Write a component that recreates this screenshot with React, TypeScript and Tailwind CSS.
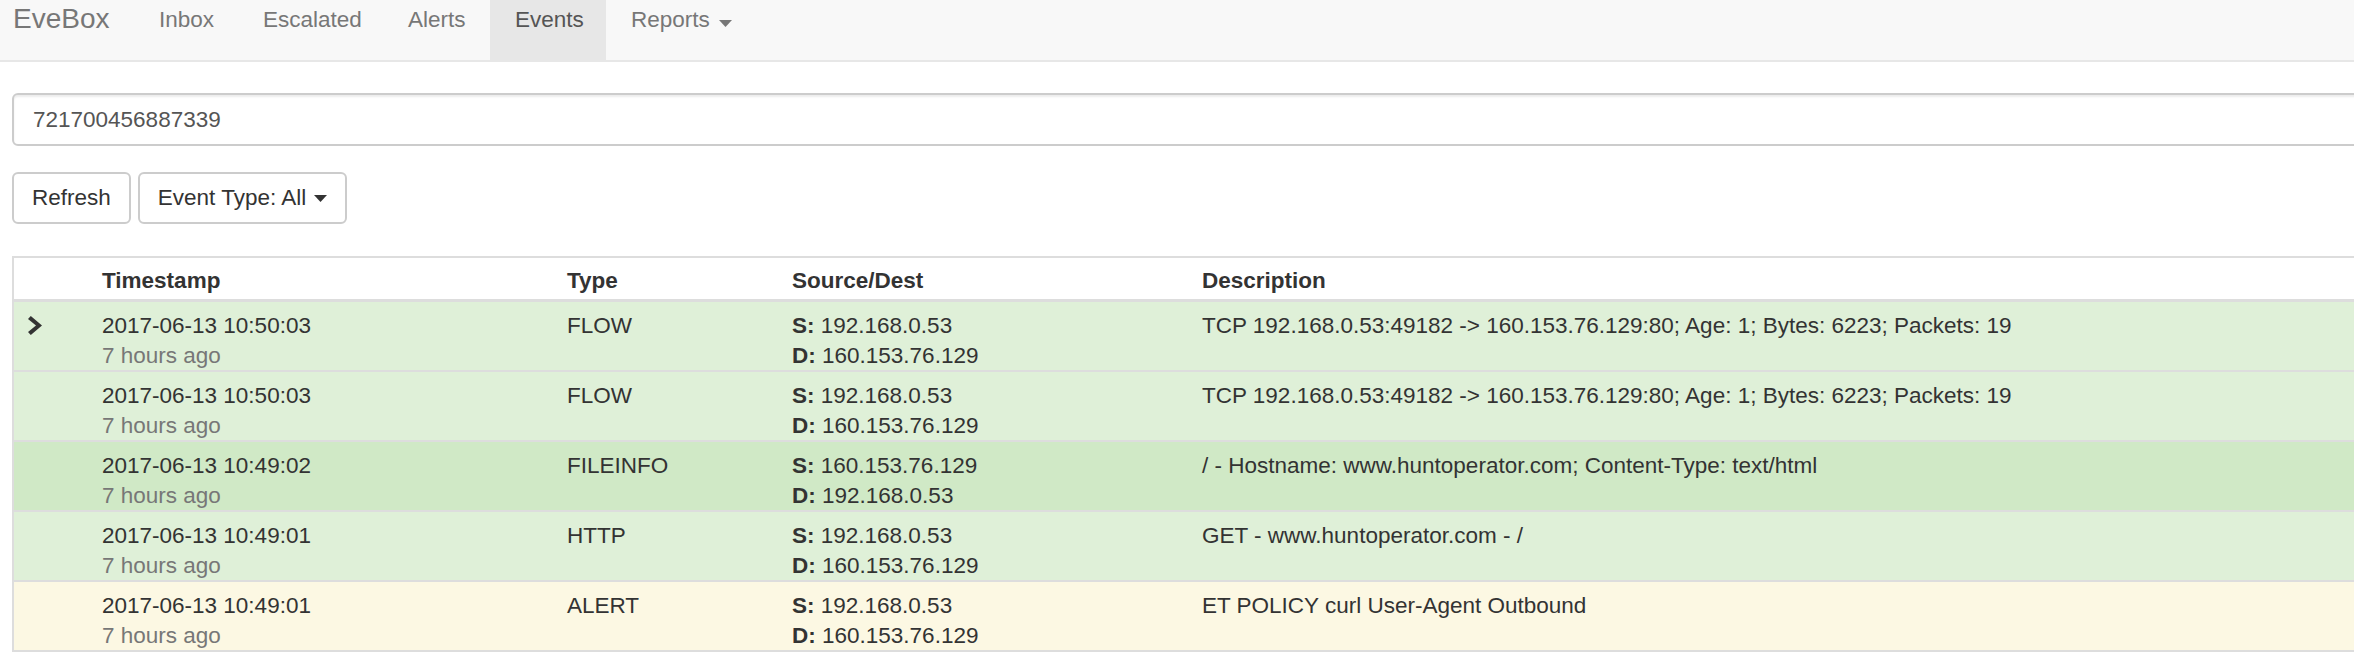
import React from "react";

type EventRow = {
  ts: string;
  type: string;
  src: string;
  dst: string;
  desc: string;
  bg: string;
  open?: boolean;
};

const rows: EventRow[] = [
  {
    ts: "2017-06-13 10:50:03",
    type: "FLOW",
    src: "192.168.0.53",
    dst: "160.153.76.129",
    desc: "TCP 192.168.0.53:49182 -> 160.153.76.129:80; Age: 1; Bytes: 6223; Packets: 19",
    bg: "bg-[#dff0d8]",
    open: true,
  },
  {
    ts: "2017-06-13 10:50:03",
    type: "FLOW",
    src: "192.168.0.53",
    dst: "160.153.76.129",
    desc: "TCP 192.168.0.53:49182 -> 160.153.76.129:80; Age: 1; Bytes: 6223; Packets: 19",
    bg: "bg-[#dff0d8]",
  },
  {
    ts: "2017-06-13 10:49:02",
    type: "FILEINFO",
    src: "160.153.76.129",
    dst: "192.168.0.53",
    desc: "/ - Hostname: www.huntoperator.com; Content-Type: text/html",
    bg: "bg-[#d0e9c6]",
  },
  {
    ts: "2017-06-13 10:49:01",
    type: "HTTP",
    src: "192.168.0.53",
    dst: "160.153.76.129",
    desc: "GET - www.huntoperator.com - /",
    bg: "bg-[#dff0d8]",
  },
  {
    ts: "2017-06-13 10:49:01",
    type: "ALERT",
    src: "192.168.0.53",
    dst: "160.153.76.129",
    desc: "ET POLICY curl User-Agent Outbound",
    bg: "bg-[#fcf8e3]",
  },
];

const navItems = [
  { label: "Inbox", w: "w-[104px]" },
  { label: "Escalated", w: "w-[145px]" },
  { label: "Alerts", w: "w-[107px]" },
];

function Caret({ color }: { color: string }) {
  return (
    <svg width="13" height="7" viewBox="0 0 13 7" className="block">
      <polygon points="0,0 13,0 6.5,7" fill={color} />
    </svg>
  );
}

function Chevron() {
  return (
    <svg width="14" height="19" viewBox="0 0 14 19">
      <path d="M2.8 0 L14 9.5 L2.8 19 L0 16 L8 9.5 L0 3 Z" fill="#333" />
    </svg>
  );
}

const cols = "grid grid-cols-[80px_465px_225px_410px_1fr]";

export default function App() {
  return (
    <div
      className="w-full min-h-[666px] overflow-hidden bg-white text-[#333] text-[22.5px] leading-[30px]"
      style={{ fontFamily: '"Liberation Sans", Arial, Helvetica, sans-serif' }}
    >
      {/* navbar */}
      <div className="flex h-[62px] bg-[#f8f8f8] border-b-2 border-[#e7e7e7] text-[#777]">
        <div className="w-[134px] pl-[13px] pt-[4px] text-[28px] leading-[30px]">EveBox</div>
        {navItems.map((n) => (
          <div key={n.label} className={`${n.w} pl-[25px] pt-[5px]`}>
            {n.label}
          </div>
        ))}
        <div className="w-[116px] pl-[25px] pt-[5px] bg-[#e7e7e7] text-[#555]">Events</div>
        <div className="pl-[25px] pt-[5px] flex items-start gap-[9px]">
          <span>Reports</span>
          <span className="mt-[15px] flex">
            <Caret color="#777" />
          </span>
        </div>
      </div>

      <div className="w-[2420px] pl-[12px]">
        <div className="mt-[31px] h-[53px] border-2 border-[#cccccc] rounded-[6px] flex items-center pl-[19px] text-[#555] shadow-[inset_0_2px_2px_rgba(0,0,0,0.075)]">
          721700456887339
        </div>

        <div className="mt-[26px] flex gap-[7px]">
          <button className="w-[119px] h-[52px] border-2 border-[#cccccc] rounded-[6px] bg-white flex items-center justify-center text-[#333]">
            Refresh
          </button>
          <button className="w-[209px] h-[52px] border-2 border-[#cccccc] rounded-[6px] bg-white flex items-center justify-center gap-[8px] text-[#333]">
            <span>Event Type: All</span>
            <Caret color="#333" />
          </button>
        </div>

        <div className="mt-[32px] border-2 border-[#dddddd]">
          <div className={`${cols} h-[44px] pt-[8px] font-bold border-b-[3px] border-[#dddddd]`}>
            <div />
            <div className="pl-[8px]">Timestamp</div>
            <div className="pl-[8px]">Type</div>
            <div className="pl-[8px]">Source/Dest</div>
            <div className="pl-[8px]">Description</div>
          </div>
          {rows.map((r, i) => (
            <div
              key={i}
              className={`${cols} ${r.bg} h-[68px] pt-[9px] ${i > 0 ? "border-t-2 border-[#dddddd] h-[70px]" : ""}`}
            >
              <div className="pl-[14px] pt-[5px]">{r.open ? <Chevron /> : null}</div>
              <div className="pl-[8px]">
                <div>{r.ts}</div>
                <div className="text-[#777]">7 hours ago</div>
              </div>
              <div className="pl-[8px]">{r.type}</div>
              <div className="pl-[8px]">
                <div>
                  <b>S:</b> {r.src}
                </div>
                <div>
                  <b>D:</b> {r.dst}
                </div>
              </div>
              <div className="pl-[8px]">{r.desc}</div>
            </div>
          ))}
        </div>
      </div>
    </div>
  );
}
